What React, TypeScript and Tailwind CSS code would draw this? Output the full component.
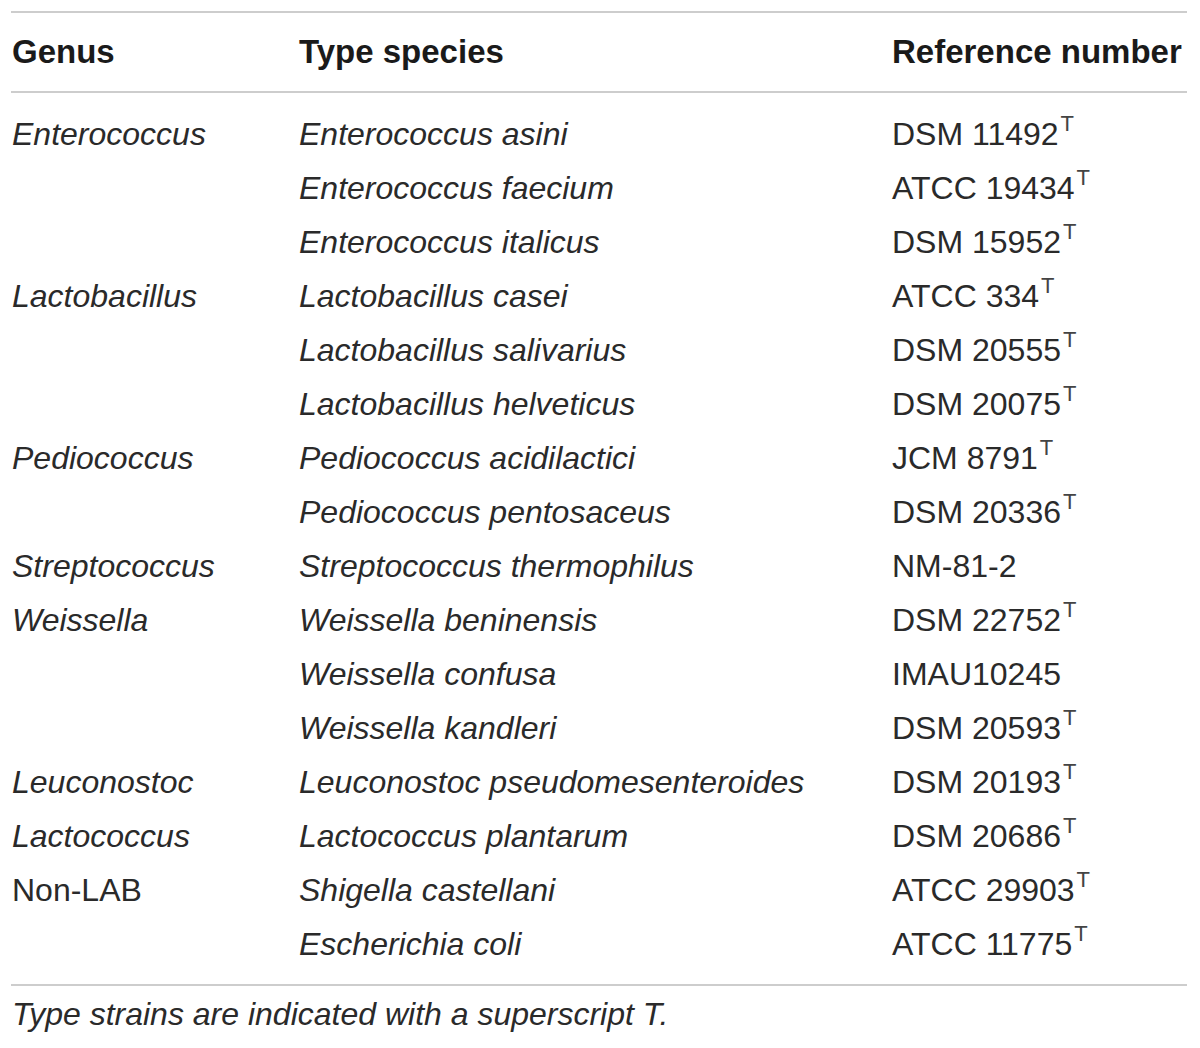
const rows: { genus?: string; genusItalic?: boolean; species: string; ref: string; type: boolean }[] = [
  { genus: 'Enterococcus', genusItalic: true, species: 'Enterococcus asini', ref: 'DSM 11492', type: true },
  { species: 'Enterococcus faecium', ref: 'ATCC 19434', type: true },
  { species: 'Enterococcus italicus', ref: 'DSM 15952', type: true },
  { genus: 'Lactobacillus', genusItalic: true, species: 'Lactobacillus casei', ref: 'ATCC 334', type: true },
  { species: 'Lactobacillus salivarius', ref: 'DSM 20555', type: true },
  { species: 'Lactobacillus helveticus', ref: 'DSM 20075', type: true },
  { genus: 'Pediococcus', genusItalic: true, species: 'Pediococcus acidilactici', ref: 'JCM 8791', type: true },
  { species: 'Pediococcus pentosaceus', ref: 'DSM 20336', type: true },
  { genus: 'Streptococcus', genusItalic: true, species: 'Streptococcus thermophilus', ref: 'NM-81-2', type: false },
  { genus: 'Weissella', genusItalic: true, species: 'Weissella beninensis', ref: 'DSM 22752', type: true },
  { species: 'Weissella confusa', ref: 'IMAU10245', type: false },
  { species: 'Weissella kandleri', ref: 'DSM 20593', type: true },
  { genus: 'Leuconostoc', genusItalic: true, species: 'Leuconostoc pseudomesenteroides', ref: 'DSM 20193', type: true },
  { genus: 'Lactococcus', genusItalic: true, species: 'Lactococcus plantarum', ref: 'DSM 20686', type: true },
  { genus: 'Non-LAB', genusItalic: false, species: 'Shigella castellani', ref: 'ATCC 29903', type: true },
  { species: 'Escherichia coli', ref: 'ATCC 11775', type: true },
];

export default function App() {
  return (
    <div className="w-[1200px] h-[1048px] bg-white text-[#1e1e1e] font-['Liberation_Sans',Arial,sans-serif] pt-[11px]">
      <div className="ml-[11px] w-[1176px]">
        {/* header */}
        <div className="border-t-2 border-b-2 border-[#cdcdcd] h-[82px] grid grid-cols-[288px_593px_1fr] items-center text-[33px] font-bold text-[#1a1a1a]">
          <div className="pl-[1px]">Genus</div>
          <div>Type species</div>
          <div>Reference number</div>
        </div>

        {/* body */}
        <div className="pt-[14px] pb-[13px] border-b-2 border-[#cdcdcd] text-[32px] text-[#2a2a2a]">
          {rows.map((r, i) => (
            <div key={i} className="grid grid-cols-[288px_593px_1fr] h-[54px] leading-[54px]">
              <div className={r.genusItalic ? 'italic pl-[1px]' : 'pl-[1px]'}>{r.genus ?? ''}</div>
              <div className="italic">{r.species}</div>
              <div>
                {r.ref}
                {r.type && <span className="relative top-[-14px] text-[22px] ml-[2px] text-[#444]">T</span>}
              </div>
            </div>
          ))}
        </div>

        {/* footnote */}
        <div className="pt-[8px] h-[48px] leading-[40px] pl-[1px] italic text-[32px] text-[#2a2a2a]">
          Type strains are indicated with a superscript T.
        </div>
      </div>
    </div>
  );
}
